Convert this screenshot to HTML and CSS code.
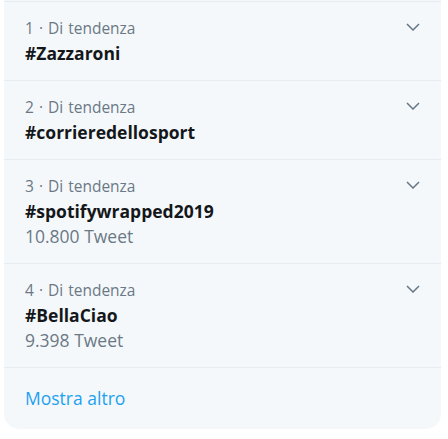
FILE: index.html
```html
<!DOCTYPE html>
<html lang="it">
<head>
    <meta charset="UTF-8">
    <meta name="viewport" content="width=device-width, initial-scale=1.0">
    <title>Tendenze</title>
    <link rel="stylesheet" href="styles.css">
</head>
<body>
    <section class="trends-card">
        <div class="trend-item">
            <div class="trend-text">
                <div class="trend-meta">1 · Di tendenza</div>
                <div class="trend-name">#Zazzaroni</div>
            </div>
            <svg class="chevron" width="14" height="8" viewBox="0 0 14 8"><polyline points="1,1 7,7 13,1"/></svg>
        </div>
        <div class="trend-item">
            <div class="trend-text">
                <div class="trend-meta">2 · Di tendenza</div>
                <div class="trend-name">#corrieredellosport</div>
            </div>
            <svg class="chevron" width="14" height="8" viewBox="0 0 14 8"><polyline points="1,1 7,7 13,1"/></svg>
        </div>
        <div class="trend-item">
            <div class="trend-text">
                <div class="trend-meta">3 · Di tendenza</div>
                <div class="trend-name">#spotifywrapped2019</div>
                <div class="trend-count">10.800 Tweet</div>
            </div>
            <svg class="chevron" width="14" height="8" viewBox="0 0 14 8"><polyline points="1,1 7,7 13,1"/></svg>
        </div>
        <div class="trend-item">
            <div class="trend-text">
                <div class="trend-meta">4 · Di tendenza</div>
                <div class="trend-name">#BellaCiao</div>
                <div class="trend-count">9.398 Tweet</div>
            </div>
            <svg class="chevron" width="14" height="8" viewBox="0 0 14 8"><polyline points="1,1 7,7 13,1"/></svg>
        </div>
        <a href="#" class="show-more">Mostra altro</a>
    </section>
</body>
</html>
```

FILE: styles.css
```css
/* General Styles */
body {
    font-family: 'Open Sans', 'Noto Sans', sans-serif;
    margin: 0;
    padding: 0;
    background-color: #ffffff;
}

/* Trends card */
.trends-card {
    width: 437px;
    margin-left: 4px;
    padding-top: 1px;
    background-color: #f5f8fa;
    border-radius: 0 0 15px 15px;
}

.trend-item {
    display: flex;
    justify-content: space-between;
    align-items: flex-start;
    padding: 14px 21px;
    border-top: 1px solid #e6ecf0;
}

.trend-meta,
.trend-name,
.trend-count {
    line-height: 25px;
}

.trend-meta {
    font-size: 15.5px;
    word-spacing: 1px;
    color: #6b7886;
}

.trend-name {
    font-size: 17.5px;
    font-weight: 700;
    color: #14171a;
}

.trend-count {
    font-size: 17.5px;
    color: #6b7886;
}

.chevron {
    margin-top: 7px;
    fill: none;
    stroke: #657786;
    stroke-width: 1.5;
}

.show-more {
    display: block;
    padding: 18px 21px;
    line-height: 25px;
    font-size: 17.5px;
    color: #1da1f2;
    text-decoration: none;
    border-top: 1px solid #e6ecf0;
}
```
